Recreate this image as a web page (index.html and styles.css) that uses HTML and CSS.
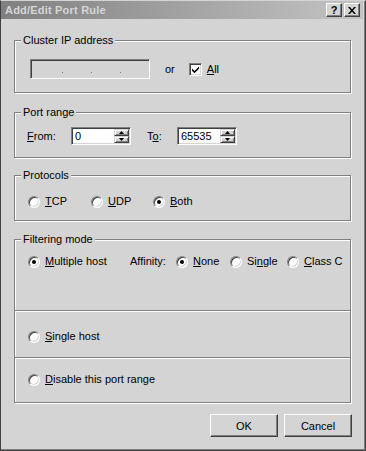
FILE: index.html
```html
<!DOCTYPE html>
<html lang="en">
<head>
  <meta charset="UTF-8" />
  <title>Add/Edit Port Rule</title>
  <link rel="stylesheet" href="styles.css">
</head>
<body>

<div class="window">
  <div class="titlebar">
    <span class="title">Add/Edit Port Rule</span>
    <div class="caption-buttons">
      <span class="cap-btn cap-help">?</span>
      <span class="cap-btn">
        <svg width="8" height="7" viewBox="0 0 8 7"><path d="M0 0h2l2 2.5L6 0h2L5 3.5 8 7H6L4 4.5 2 7H0l3-3.5z" fill="#000"/></svg>
      </span>
    </div>
  </div>

  <div class="dialog">
    <fieldset class="group group-cluster">
      <legend>Cluster IP address</legend>
      <div class="group-body body-cluster">
        <div class="ip-field">
          <span class="dot"></span><span class="dot"></span><span class="dot"></span>
        </div>
        <span class="or">or</span>
        <label class="check">
          <span class="checkbox">
            <svg width="7" height="7" viewBox="0 0 7 7"><path d="M0 2.5l2.5 2.5L7 0.5V2.8L2.5 7.2 0 4.7z" fill="#000"/></svg>
          </span>
          <span><u>A</u>ll</span>
        </label>
      </div>
    </fieldset>

    <fieldset class="group group-ports">
      <legend>Port range</legend>
      <div class="group-body body-ports">
        <span class="spin-label from"><u>F</u>rom:</span>
        <div class="spin">
          <span class="spin-value">0</span>
          <span class="spin-buttons">
            <span class="spin-btn"><svg width="5" height="3" viewBox="0 0 5 3"><path d="M2.5 0L5 3H0z" fill="#000"/></svg></span>
            <span class="spin-btn"><svg width="5" height="3" viewBox="0 0 5 3"><path d="M0 0h5L2.5 3z" fill="#000"/></svg></span>
          </span>
        </div>
        <span class="spin-label to">T<u>o</u>:</span>
        <div class="spin">
          <span class="spin-value">65535</span>
          <span class="spin-buttons">
            <span class="spin-btn"><svg width="5" height="3" viewBox="0 0 5 3"><path d="M2.5 0L5 3H0z" fill="#000"/></svg></span>
            <span class="spin-btn"><svg width="5" height="3" viewBox="0 0 5 3"><path d="M0 0h5L2.5 3z" fill="#000"/></svg></span>
          </span>
        </div>
      </div>
    </fieldset>

    <fieldset class="group group-protocols">
      <legend>Protocols</legend>
      <div class="group-body body-protocols">
        <label class="opt w-tcp"><span class="radio"></span><span><u>T</u>CP</span></label>
        <label class="opt w-udp"><span class="radio"></span><span><u>U</u>DP</span></label>
        <label class="opt"><span class="radio on"></span><span><u>B</u>oth</span></label>
      </div>
    </fieldset>

    <fieldset class="group group-filter">
      <legend>Filtering mode</legend>
      <div class="section section-multi">
        <label class="opt w-multi"><span class="radio on"></span><span><u>M</u>ultiple host</span></label>
        <span class="affinity">Affinity:</span>
        <label class="opt w-none"><span class="radio on"></span><span><u>N</u>one</span></label>
        <label class="opt w-single"><span class="radio"></span><span>Si<u>n</u>gle</span></label>
        <label class="opt"><span class="radio"></span><span><u>C</u>lass C</span></label>
      </div>
      <div class="section section-single">
        <label class="opt"><span class="radio"></span><span><u>S</u>ingle host</span></label>
      </div>
      <div class="section section-disable">
        <label class="opt"><span class="radio"></span><span><u>D</u>isable this port range</span></label>
      </div>
    </fieldset>

    <div class="actions">
      <button class="btn">OK</button>
      <button class="btn">Cancel</button>
    </div>
  </div>
</div>

</body>
</html>
```

FILE: styles.css
```css
body {
  margin: 0;
  background: #d4d4d4;
}
.window {
  width: 366px;
  height: 451px;
  box-sizing: border-box;
  background: #d4d4d4;
  border: 1px solid;
  border-color: #d4d4d4 #404040 #404040 #404040;
  box-shadow: inset -1px -1px 0 #808080;
  font-family: "Liberation Sans", Arial, sans-serif;
  font-size: 11px;
  color: #000;
}
.titlebar {
  height: 18px;
  margin-right: 2px;
  padding: 0 3px 0 4px;
  display: flex;
  align-items: center;
  justify-content: space-between;
  background: linear-gradient(to right, #808080, #c4c4c4);
}
.title {
  font-weight: bold;
  font-size: 11px;
  letter-spacing: 0.2px;
  color: #d6d6d6;
}
.caption-buttons {
  display: flex;
  gap: 1px;
}
.cap-btn {
  width: 16px;
  height: 14px;
  box-sizing: border-box;
  display: flex;
  align-items: center;
  justify-content: center;
  background: #d4d4d4;
  border: 1px solid;
  border-color: #fff #404040 #404040 #fff;
  box-shadow: inset -1px -1px 0 #808080;
  font-weight: bold;
  font-size: 11px;
  line-height: 12px;
}
.cap-help {
  margin-right: 1px;
}
.dialog {
  padding: 15px 13px 0 13px;
}

/* group boxes */
.group {
  margin: 0 1px 12px 0;
  padding: 0;
  min-width: 0;
  border: 1px solid #808080;
  box-shadow: 1px 1px 0 #fff, inset 1px 1px 0 #fff;
}
.group legend {
  margin-left: 6px;
  padding: 0 2px;
  line-height: 13px;
  background: #d4d4d4;
}
.group-cluster {
  margin-bottom: 13px;
}
.group-ports {
  margin-bottom: 11px;
}
.group-filter {
  margin-bottom: 0;
}
.group-body {
  display: flex;
  align-items: center;
}
.body-cluster {
  padding: 12px 0 13px 15px;
}
.body-ports {
  padding: 8px 0 12px 12px;
}
.body-protocols {
  padding: 13px 0 12px 13px;
  line-height: 13px;
}

/* cluster ip */
.ip-field {
  width: 120px;
  height: 20px;
  box-sizing: border-box;
  display: flex;
  align-items: flex-end;
  gap: 28px;
  padding: 0 0 5px 31px;
  border: 1px solid;
  border-color: #808080 #fff #fff #808080;
  box-shadow: inset 1px 1px 0 #404040, inset -1px -1px 0 #d4d4d4;
}
.dot {
  width: 1px;
  height: 1px;
  background: #7a7a7a;
}
.or {
  margin-left: 15px;
}
.check {
  display: flex;
  align-items: center;
  margin-left: 14px;
}
.checkbox {
  width: 13px;
  height: 13px;
  box-sizing: border-box;
  display: flex;
  align-items: center;
  justify-content: center;
  margin-right: 5px;
  background: #fff;
  border: 1px solid;
  border-color: #808080 #fff #fff #808080;
  box-shadow: inset 1px 1px 0 #404040, inset -1px -1px 0 #d4d4d4;
}

/* spin boxes */
.spin-label.from {
  width: 44px;
}
.spin-label.to {
  width: 30px;
  margin-left: 16px;
}
.spin {
  width: 60px;
  height: 18px;
  box-sizing: border-box;
  display: flex;
  background: #fff;
  border: 1px solid;
  border-color: #808080 #fff #fff #808080;
  box-shadow: inset 1px 1px 0 #404040, inset -1px -1px 0 #d4d4d4;
  padding: 1px 1px 1px 1px;
}
.spin-value {
  flex: 1;
  padding-left: 2px;
  line-height: 14px;
}
.spin-buttons {
  width: 15px;
  display: flex;
  flex-direction: column;
}
.spin-btn {
  flex: 1;
  box-sizing: border-box;
  display: flex;
  align-items: center;
  justify-content: center;
  background: #d4d4d4;
  border: 1px solid;
  border-color: #d4d4d4 #404040 #404040 #d4d4d4;
  box-shadow: inset 1px 1px 0 #fff, inset -1px -1px 0 #808080;
}

/* radio options */
.opt {
  display: flex;
  align-items: center;
  line-height: 13px;
}
.radio {
  position: relative;
  flex: none;
  width: 12px;
  height: 12px;
  box-sizing: border-box;
  margin-right: 5px;
  border-radius: 50%;
  background: #fff;
  border: 1px solid;
  border-color: #808080 #fff #fff #808080;
  box-shadow: inset 1px 1px 0 #404040, inset -1px -1px 0 #d4d4d4;
}
.radio.on::after {
  content: "";
  position: absolute;
  left: 3px;
  top: 3px;
  width: 4px;
  height: 4px;
  border-radius: 50%;
  background: #000;
}
.w-tcp { width: 63px; }
.w-udp { width: 62px; }
.w-multi { width: 102px; }
.w-none { width: 54px; }
.w-single { width: 57px; }
.affinity {
  width: 46px;
  line-height: 13px;
}

/* filtering sections */
.section {
  display: flex;
  align-items: center;
  padding-left: 13px;
}
.section + .section {
  border-top: 1px solid #808080;
  box-shadow: inset 0 1px 0 #fff;
}
.section-multi {
  padding-top: 9px;
  padding-bottom: 42px;
}
.section-single {
  padding-top: 19px;
  padding-bottom: 14px;
}
.section-disable {
  padding-top: 15px;
  padding-bottom: 16px;
}

/* buttons */
.actions {
  display: flex;
  justify-content: flex-end;
  gap: 6px;
  margin-top: 11px;
}
.btn {
  width: 68px;
  height: 23px;
  box-sizing: border-box;
  padding: 0;
  font-family: "Liberation Sans", Arial, sans-serif;
  font-size: 11px;
  color: #000;
  background: #d4d4d4;
  border: 1px solid;
  border-color: #fff #404040 #404040 #fff;
  box-shadow: inset -1px -1px 0 #808080;
}
```
